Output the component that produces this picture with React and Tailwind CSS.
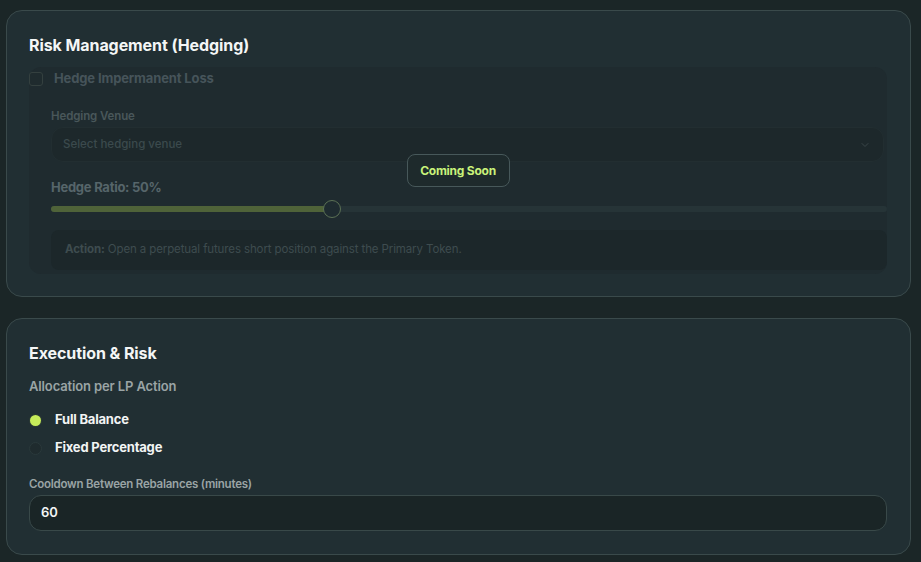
import { ChevronDown } from 'lucide-react'

// Risk / execution settings — two cards, the hedging one is disabled behind a "Coming Soon" badge
function HedgingCard() {
  return (
    <section className="rounded-2xl border border-[#3a4a4b] bg-[#212f33] pt-[22px] pb-[22px] pl-[22px] pr-[23px]">
      <h2 className="text-[16px] leading-6 font-bold tracking-[-0.005em] text-[#f4f6f6]">Risk Management (Hedging)</h2>

      <div className="relative mt-[10px] rounded-xl bg-[#1f2b2f] pt-[1px] pb-[4px]">
        {/* Toggle row */}
        <div className="flex h-5 items-center gap-[11px] mt-[1px]">
          <span className="h-[14px] w-[14px] rounded-[3px] border border-[#34403f] bg-[#1f2b2e]" />
          <span className="text-[13px] font-bold tracking-[-0.01em] text-[#46545a]">Hedge Impermanent Loss</span>
        </div>

        <div className="pl-[22px]">
          <label className="mt-[19px] block text-[11.5px] leading-4 font-semibold tracking-[-0.01em] text-[#49575a]">Hedging Venue</label>
          <div className="mt-[3px] mr-[3px] flex h-[35px] items-center justify-between rounded-xl border border-[#222e31] bg-[#1d282b] pl-[11px] pr-[12px]">
            <span className="text-[11.5px] font-medium text-[#3b4a4d]">Select hedging venue</span>
            <ChevronDown size={12} className="text-[#3a4649]" />
          </div>

          <div className="mt-[15px] text-[13px] leading-5 font-bold tracking-[-0.02em] text-[#56656a]">Hedge Ratio: 50%</div>

          {/* Slider */}
          <div className="relative mt-[3px] flex h-[18px] items-center">
            <div className="h-[6px] w-full rounded-full bg-[#263437]">
              <div className="h-full w-[33.6%] rounded-full bg-[#4f6339]" />
            </div>
            <span className="absolute left-[33.6%] top-0 h-[18px] w-[18px] -translate-x-1/2 rounded-full border-[1.5px] border-[#5b7155] bg-[#1e2b30]" />
          </div>

          <div className="mt-[12px] flex h-10 items-center rounded-lg bg-[#1c272a] pl-[14px]">
            <p className="text-[11.5px] tracking-[-0.01em] text-[#3e4c4f]">
              <span className="font-bold">Action:</span> Open a perpetual futures short position against the Primary Token.
            </p>
          </div>
        </div>

        <div className="absolute inset-0 flex items-center justify-center">
          <span className="flex h-[33px] w-[103px] items-center justify-center rounded-lg border border-[#47585a] bg-[#1e2a2c] text-[12px] font-bold tracking-[-0.02em] text-[#c9f27a]">
            Coming Soon
          </span>
        </div>
      </div>
    </section>
  )
}

function Radio({ checked, label }) {
  return (
    <div className="flex h-5 items-center gap-[13px]">
      {checked ? (
        <span className="flex h-[13px] w-[13px] items-center justify-center rounded-full bg-[#2c3b34]">
          <span className="h-[11px] w-[11px] rounded-full bg-[#c6ec5a]" />
        </span>
      ) : (
        <span className="h-[13px] w-[13px] rounded-full border border-[#2a393b] bg-[#1f2b2e]" />
      )}
      <span className="text-[13px] font-bold tracking-[-0.015em] text-[#f2f4f4]">{label}</span>
    </div>
  )
}

function ExecutionCard() {
  return (
    <section className="rounded-2xl border border-[#3a4a4b] bg-[#212f33] pt-[22px] pb-[23px] pl-[22px] pr-[23px]">
      <h2 className="text-[16px] leading-6 font-bold tracking-[-0.005em] text-[#f4f6f6]">Execution &amp; Risk</h2>
      <div className="mt-[11px] text-[13px] leading-5 font-semibold tracking-[-0.01em] text-[#9aa4a5]">Allocation per LP Action</div>

      <div className="mt-[14px] flex flex-col gap-2">
        <Radio checked label="Full Balance" />
        <Radio label="Fixed Percentage" />
      </div>

      <label className="mt-[18px] block text-[11.5px] leading-4 font-semibold tracking-[-0.02em] text-[#9aa4a5]">
        Cooldown Between Rebalances (minutes)
      </label>
      <div className="mt-[3px] flex h-[36px] items-center rounded-xl border border-[#394949] bg-[#1a2526] pl-[11px]">
        <span className="text-[13px] font-semibold text-[#f2f4f4]">60</span>
      </div>
    </section>
  )
}

export default function App() {
  return (
    <div className="min-h-screen bg-[#1b2627] pt-[10px] pl-[6px] pr-[10px] pb-4" style={{ fontFamily: 'Inter, "Liberation Sans", sans-serif' }}>
      <div className="flex flex-col gap-[21px]">
        <HedgingCard />
        <ExecutionCard />
      </div>
    </div>
  )
}
